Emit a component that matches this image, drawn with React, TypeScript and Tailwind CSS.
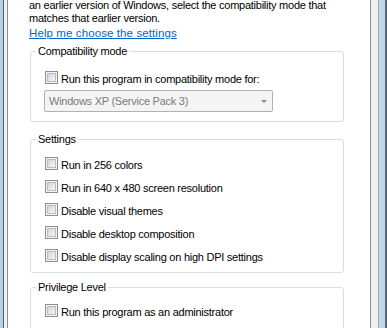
const FONT = { fontFamily: '"Liberation Sans", Arial, sans-serif' };

const SETTINGS = [
  "Run in 256 colors",
  "Run in 640 x 480 screen resolution",
  "Disable visual themes",
  "Disable desktop composition",
  "Disable display scaling on high DPI settings",
];

function CheckBox() {
  return (
    <div className="h-[13px] w-[13px] shrink-0 border border-[#8e8f8f] bg-[#f4f4f4] p-[1px]">
      <div className="h-full w-full border border-[#b8bcc1] bg-linear-to-br from-[#d2d4d8] to-[#f7f7f7]" />
    </div>
  );
}

function CheckRow({ label }: { label: string }) {
  return (
    <div className="flex gap-[3px]">
      <CheckBox />
      <span className="mt-[2px] whitespace-nowrap leading-[13px]">{label}</span>
    </div>
  );
}

function Group({
  title,
  className,
  bodyClassName,
  children,
}: {
  title: string;
  className: string;
  bodyClassName: string;
  children: React.ReactNode;
}) {
  return (
    <fieldset className={`ml-[1px] w-[314px] rounded-[3px] border border-[#d5dfe5] ${className}`}>
      <legend className="ml-[5px] px-[2px] leading-[14px]">{title}</legend>
      <div className={`pl-[14px] ${bodyClassName}`}>{children}</div>
    </fieldset>
  );
}

export default function App() {
  return (
    <div
      className="flex h-[328px] w-[387px] overflow-hidden bg-white text-[11px] tracking-[-0.25px] text-black"
      style={FONT}
    >
      {/* window frame, left */}
      <div className="w-[3px] bg-[#bccde3]" />
      <div className="w-[1px] bg-[#4d5b6b]" />
      <div className="w-[3px] bg-[#f0f0f0]" />

      {/* tab page */}
      <div className="w-[364px] border-x border-[#898c95] bg-white pl-[21px]">
        <p className="mt-[-1px] whitespace-nowrap leading-[13px]">
          an earlier version of Windows, select the compatibility mode that
          <br />
          matches that earlier version.
        </p>
        <a
          href="#"
          className="mt-[1px] block w-fit whitespace-nowrap text-[11.5px] leading-[15px] tracking-[0.1px] text-[#0066cc] underline"
        >
          Help me choose the settings
        </a>

        <Group title="Compatibility mode" className="mt-[3px]" bodyClassName="pt-[13px] pb-[9px]">
          <CheckRow label="Run this program in compatibility mode for:" />
          <div className="mt-[4px] ml-[-1px] flex h-[22px] w-[229px] items-center justify-between rounded-[2px] border border-[#adb2b5] bg-[#f4f4f4] pl-[4px] pr-[5px] text-[#7a7a7a]">
            <span className="whitespace-nowrap">Windows XP (Service Pack 3)</span>
            <svg width="6" height="3" viewBox="0 0 6 3">
              <path d="M0 0h6L3 3z" fill="#8a8a8a" />
            </svg>
          </div>
        </Group>

        <Group title="Settings" className="mt-[10px]" bodyClassName="pt-[11px] pb-[8px]">
          <div className="flex flex-col gap-[8px]">
            {SETTINGS.map((s) => (
              <CheckRow key={s} label={s} />
            ))}
          </div>
        </Group>

        <Group title="Privilege Level" className="mt-[7px]" bodyClassName="pt-[10px] pb-[12px]">
          <CheckRow label="Run this program as an administrator" />
        </Group>
      </div>

      {/* dialog background + window frame, right */}
      <div className="w-[7px] bg-[#f0f0f0]" />
      <div className="w-[1px] bg-[#a5a9ae]" />
      <div className="w-[6px] bg-[#c3d6ee]" />
      <div className="w-[2px] bg-[#59677a]" />
    </div>
  );
}
